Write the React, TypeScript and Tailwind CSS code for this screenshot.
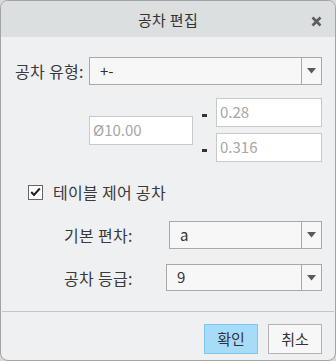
import React from "react"

const font = { fontFamily: '"Noto Sans CJK KR", "Noto Sans", sans-serif' }

function Select({ value, className }: { value: string; className: string }) {
    return (
        <div className={`flex border border-[#a9a9a9] bg-[#f7f7f7] ${className}`}>
            <div className="flex-1 flex items-center pl-[10px] text-[15px] text-[#333]">{value}</div>
            <div className="w-[20px] border-l border-[#a9a9a9] flex items-center justify-center">
                <svg width="9" height="6" viewBox="0 0 9 6">
                    <path d="M0 0 H9 L4.5 5.5 Z" fill="#5a5a5a" />
                </svg>
            </div>
        </div>
    )
}

function Field({ value, className }: { value: string; className: string }) {
    return (
        <div className={`flex items-center border border-[#c9c9c9] bg-white pl-[3px] text-[15px] text-[#a6a6a6] ${className}`}>
            {value}
        </div>
    )
}

export default function App() {
    return (
        <div className="w-[336px] h-[361px] bg-[#d8d8d8]" style={font}>
            <div className="w-full h-full flex flex-col rounded-[8px] border border-[#a3a3a3] overflow-hidden bg-[#eef0f1]">
                {/* Title bar */}
                <div className="h-[36px] bg-[#dcdfe0] flex items-center relative shrink-0">
                    <div className="flex-1 text-center text-[15px] tracking-[0.3px] text-[#333] pt-[2px]">공차 편집</div>
                    <svg className="absolute right-[13px] top-[15px]" width="11" height="11" viewBox="0 0 11 11">
                        <path d="M1.5 1.5 L9.5 9.5 M9.5 1.5 L1.5 9.5" stroke="#5c5c5c" strokeWidth="2.6" />
                    </svg>
                </div>

                {/* Tolerance type */}
                <div className="flex items-center mt-[20px] pl-[14px] pr-[13px]">
                    <div className="w-[74px] text-[16px] tracking-[0.3px] text-[#3a3a3a]">공차 유형:</div>
                    <Select value="+-" className="flex-1 h-[28px]" />
                </div>

                {/* Values */}
                <div className="flex items-center mt-[13px] pl-[88px] pr-[13px]">
                    <Field value="Ø10.00" className="w-[105px] h-[29px]" />
                    <div className="flex flex-col gap-[6px] ml-[23px]">
                        {["0.28", "0.316"].map((v) => (
                            <div key={v} className="flex items-center">
                                <div className="w-[5px] h-[3px] bg-[#333] -ml-[14px] mr-[9px] mt-[5px]" />
                                <Field value={v} className="w-[106px] h-[29px]" />
                            </div>
                        ))}
                    </div>
                </div>

                {/* Table-driven */}
                <div className="flex items-center mt-[18px] pl-[27px]">
                    <div className="w-[15px] h-[15px] border border-[#666] bg-white flex items-center justify-center">
                        <svg width="11" height="10" viewBox="0 0 11 10">
                            <path d="M1.2 5 L4 8 L9.8 1.5" fill="none" stroke="#222" strokeWidth="2" />
                        </svg>
                    </div>
                    <div className="ml-[10px] text-[16px] tracking-[0.3px] text-[#3a3a3a]">테이블 제어 공차</div>
                </div>

                <div className="flex items-center mt-[17px] pl-[63px] pr-[13px]">
                    <div className="w-[105px] text-[16px] tracking-[0.3px] text-[#3a3a3a]">기본 편차:</div>
                    <Select value="a" className="flex-1 h-[28px]" />
                </div>

                <div className="flex items-center mt-[15px] pl-[63px] pr-[13px]">
                    <div className="w-[102px] text-[16px] tracking-[0.3px] text-[#3a3a3a]">공차 등급:</div>
                    <Select value="9" className="flex-1 h-[27px]" />
                </div>

                {/* Footer */}
                <div className="mt-[20px] mx-[1px] border-t border-[#c6c6c6]" />
                <div className="flex justify-end gap-[10px] mt-[12px] pr-[13px]">
                    <button className="w-[54px] h-[30px] border border-[#7cc6ee] bg-[#a7dcf8] text-[15px] text-[#333]">확인</button>
                    <button className="w-[54px] h-[30px] border border-[#b3b3b3] bg-[#f7f7f7] text-[15px] text-[#333]">취소</button>
                </div>
            </div>
        </div>
    )
}
